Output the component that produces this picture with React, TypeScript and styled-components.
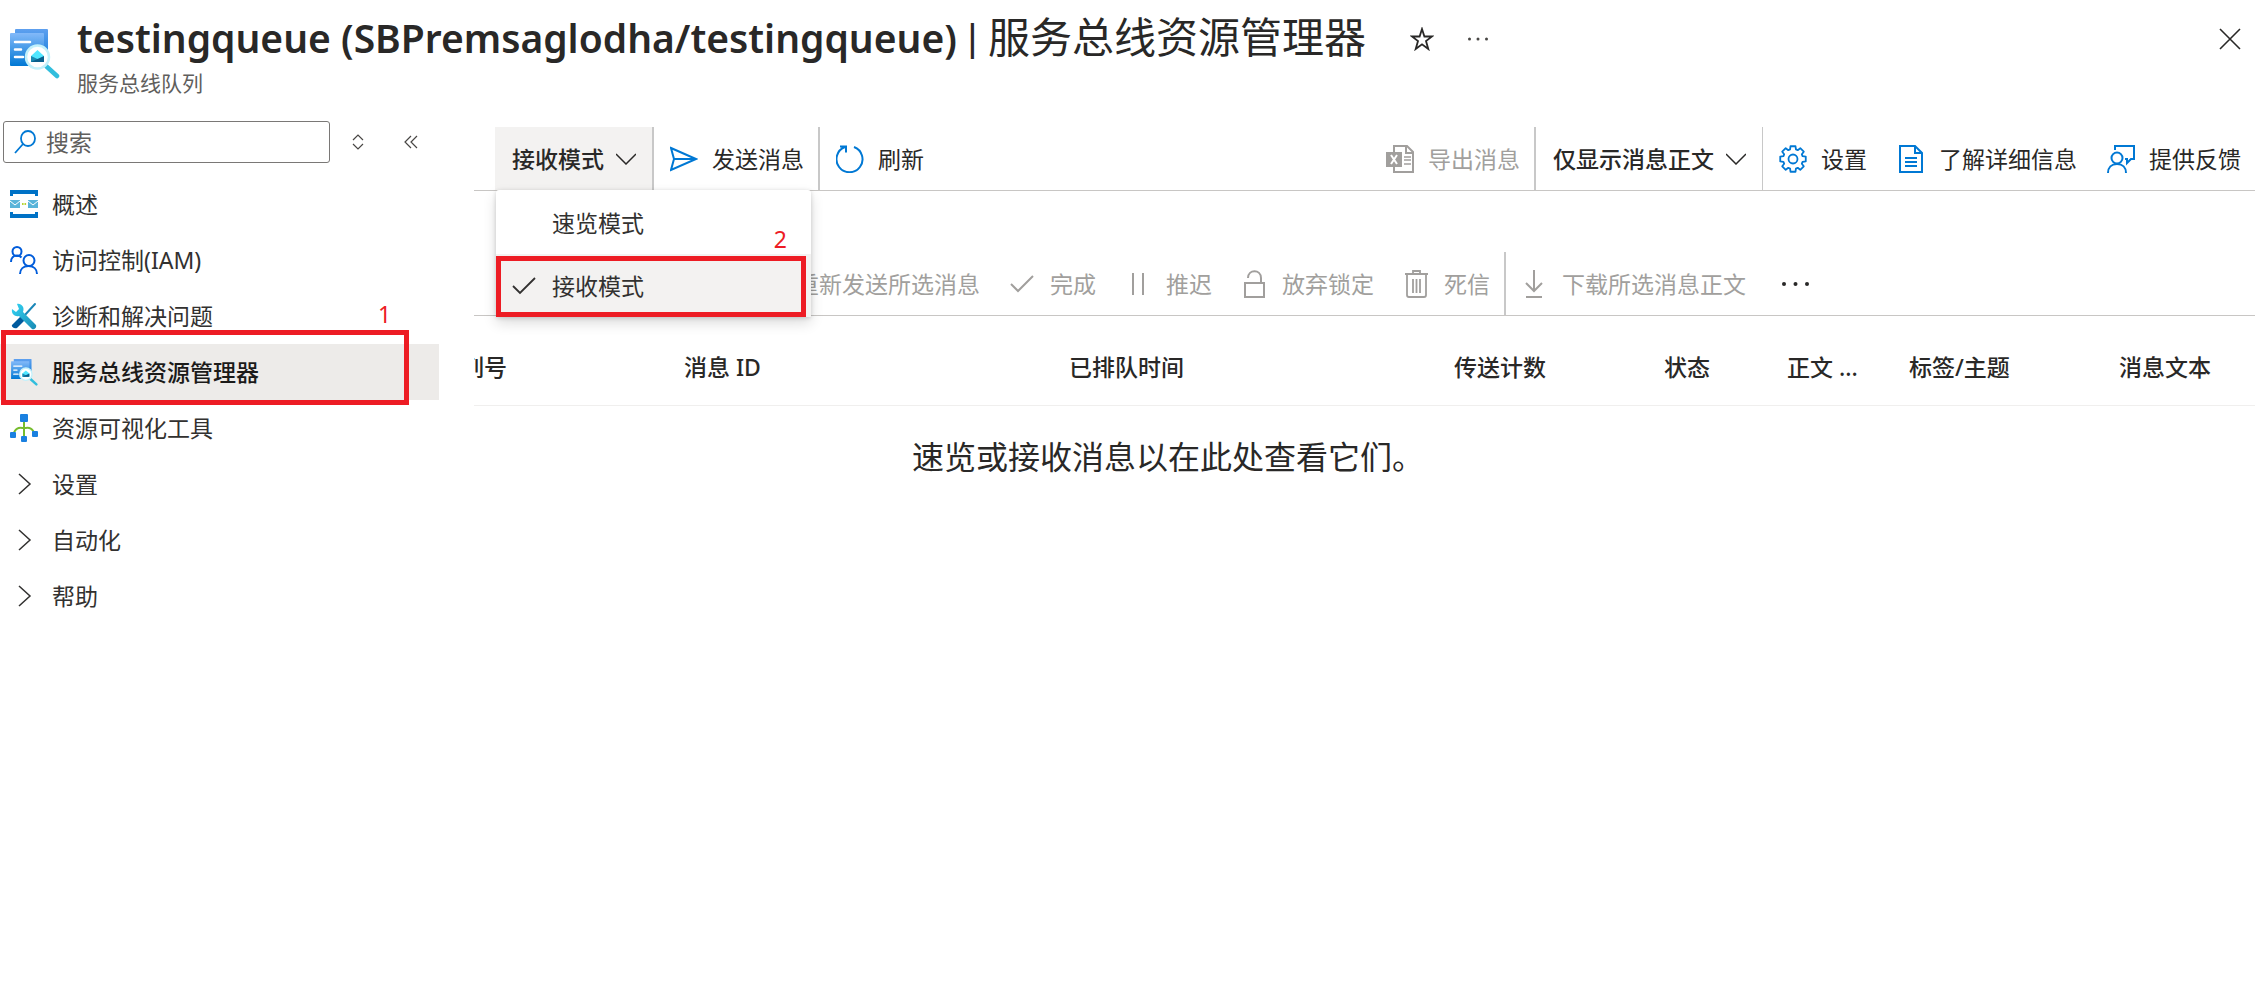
import React from "react";
import styled, { createGlobalStyle } from "styled-components";

const GlobalStyle = createGlobalStyle`
  *, *::before, *::after { box-sizing: border-box; }
  body {
    margin: 0;
    background: #ffffff;
    color: #292827;
    font-family: "Noto Sans", "Noto Sans CJK SC", sans-serif;
    font-size: 23px;
    line-height: 32px;
  }
  button, input { font: inherit; color: inherit; }
  svg { display: block; flex: none; }
`;

const BLUE = "#0078d4";
const RED = "#ed1c24";

/* ---------- layout ---------- */

const Page = styled.div`
  display: flex;
  flex-direction: column;
  min-height: 100vh;
`;

const Header = styled.header`
  display: flex;
  align-items: flex-start;
  height: 121px;
  padding: 7px 3px 0 8px;
`;

const HeaderIcon = styled.div`
  padding-top: 20px;
  margin-right: 17px;
`;

const TitleBlock = styled.div`
  display: flex;
  flex-direction: column;
  white-space: nowrap;
`;

const Title = styled.h1`
  margin: 0;
  font-size: 42px;
  line-height: 60px;
  font-weight: 400;
`;

const ResourceName = styled.span`
  font-size: 39px;
  font-weight: 600;
`;

const TitleDivider = styled.span`
  font-family: Roboto, sans-serif;
`;

const Subtitle = styled.div`
  font-size: 21px;
  line-height: 28px;
  color: #605e5c;
`;

const HeaderActions = styled.div`
  display: flex;
  flex: 1;
  padding: 16px 0 0 34px;
  gap: 12px;
`;

const IconButton = styled.button<{ $end?: boolean; $width?: number }>`
  display: flex;
  align-items: center;
  justify-content: center;
  align-self: center;
  width: ${(p) => p.$width ?? 44}px;
  height: 32px;
  padding: 0;
  border: 0;
  background: none;
  flex: none;
  margin-left: ${(p) => (p.$end ? "auto" : "0")};
`;

const Body = styled.div`
  display: flex;
  flex: 1;
`;

const Sidebar = styled.nav`
  width: 439px;
  flex: none;
`;

const SearchRow = styled.div`
  display: flex;
  align-items: center;
  gap: 3px;
  padding-left: 3px;
  margin-bottom: 13px;
  color: #484644;
`;

const SearchBox = styled.label`
  display: flex;
  align-items: center;
  gap: 10px;
  width: 327px;
  height: 42px;
  padding: 0 10px;
  border: 1px solid #7a7876;
  border-radius: 3px;
`;

const SearchInput = styled.input`
  flex: 1;
  min-width: 0;
  padding: 0;
  border: 0;
  outline: 0;
  background: none;
  &::placeholder { color: #605e5c; opacity: 1; }
`;

const NavList = styled.ul`
  list-style: none;
  margin: 0;
  padding: 0;
`;

const NavItem = styled.li`
  position: relative;
`;

const NavLink = styled.a<{ $active?: boolean }>`
  display: flex;
  align-items: center;
  gap: 14px;
  height: 56px;
  padding-left: 10px;
  color: ${(p) => (p.$active ? "#1b1a19" : "#323130")};
  background: ${(p) => (p.$active ? "#edebe9" : "transparent")};
  font-weight: ${(p) => (p.$active ? 500 : 400)};
  text-decoration: none;
`;

const Mark = styled.span`
  position: absolute;
  border: 5px solid ${RED};
  pointer-events: none;
`;

const NavMark = styled(Mark)`
  left: 1px;
  top: -14px;
  width: 408px;
  height: 75px;
`;

const MenuMark = styled(Mark)`
  left: 0;
  right: 5px;
  top: 2px;
  bottom: 0;
`;

const Note = styled.span`
  position: absolute;
  color: ${RED};
`;

const NavNote = styled(Note)`
  left: 378px;
  top: -46px;
`;

const MenuNote = styled(Note)`
  right: 24px;
  bottom: -1px;
`;

const Main = styled.main`
  flex: 1;
  min-width: 0;
  margin-left: 35px;
  padding-top: 6px;
`;

const Toolbar = styled.div<{ $inset: number }>`
  display: flex;
  height: 64px;
  padding-left: ${(p) => p.$inset}px;
  border-bottom: 1px solid #c8c6c4;
`;

const SelectionToolbar = styled(Toolbar)`
  margin-top: 61px;
`;

const Spacer = styled.div`
  flex: 1;
`;

const Separator = styled.span<{ $thin?: boolean }>`
  width: ${(p) => (p.$thin ? 1 : 2)}px;
  background: #c8c8c8;
  flex: none;
`;

const Command = styled.button<{ $tight?: boolean }>`
  display: flex;
  align-items: center;
  gap: 14px;
  padding: 0 14px 0 ${(p) => (p.$tight ? 14 : 16)}px;
  border: 0;
  background: none;
  white-space: nowrap;
  flex: none;
  &:disabled { color: #a19f9d; }
`;

const DropCommand = styled(Command)<{ $open?: boolean }>`
  gap: 12px;
  padding: 0 16px 0 17px;
  font-weight: 500;
  background: ${(p) => (p.$open ? "#f3f2f1" : "none")};
`;

const MenuAnchor = styled.div`
  position: relative;
  display: flex;
`;

const Menu = styled.ul`
  position: absolute;
  z-index: 1;
  left: 1px;
  top: 63px;
  width: 315px;
  margin: 0;
  padding: 1px 0 0;
  list-style: none;
  background: #ffffff;
  border-radius: 3px;
  box-shadow: 0 6px 14px rgba(0, 0, 0, 0.14), 0 1px 4px rgba(0, 0, 0, 0.16);
`;

const MenuItem = styled.li`
  position: relative;
`;

const MenuButton = styled.button<{ $checked?: boolean }>`
  display: grid;
  grid-template-columns: 24px auto;
  justify-content: start;
  column-gap: 16px;
  align-items: center;
  width: 100%;
  height: 63px;
  padding: 0 16px;
  border: 0;
  text-align: left;
  color: #323130;
  background: ${(p) => (p.$checked ? "#f3f2f1" : "none")};
`;

const TableClip = styled.div`
  overflow: hidden;
`;

const MessageTable = styled.table`
  width: calc(100% + 36px);
  margin-left: -36px;
  table-layout: fixed;
  border-collapse: collapse;
`;

const HeadCell = styled.th<{ $width?: number }>`
  width: ${(p) => (p.$width ? p.$width + "px" : "auto")};
  height: 89px;
  padding: 14px 0 0;
  text-align: left;
  font-weight: 500;
  white-space: nowrap;
  border-bottom: 1px solid #f0efee;
`;

const Empty = styled.td`
  padding: 28px 0 0 474px;
  font-size: 32px;
  line-height: 46px;
`;

/* ---------- icons ---------- */

const ExplorerIcon = ({ size }: { size: number }) => (
  <svg width={size} height={size} viewBox="0 0 52 52" aria-hidden="true">
    <defs>
      <linearGradient id="page-front" x1="0" y1="0" x2="0" y2="1">
        <stop offset="0" stopColor="#83b9f9" />
        <stop offset="1" stopColor="#0078d4" />
      </linearGradient>
      <linearGradient id="page-back" x1="0" y1="0" x2="0" y2="1">
        <stop offset="0" stopColor="#5ea0ef" />
        <stop offset="1" stopColor="#0f7cdb" />
      </linearGradient>
    </defs>
    <path d="M8 2h31a1 1 0 0 1 1 1v32H7V3a1 1 0 0 1 1-1z" fill="url(#page-back)" />
    <path d="M3 6h32a1 1 0 0 1 1 1v32H3a1 1 0 0 1-1-1V7a1 1 0 0 1 1-1z" fill="url(#page-front)" />
    <path d="M7 15h15M7 22.500h6M7 30h8" stroke="#fff" strokeWidth="2.500" strokeLinecap="round" />
    <path d="M38 39l11 10" stroke="#32bedd" strokeWidth="4.500" strokeLinecap="round" />
    <circle cx="29.500" cy="30" r="11.500" fill="#fff" stroke="#c3f1fb" strokeWidth="2.500" />
    <path d="M23 29l6.500-6 6.500 6v6H23z" fill="#50e6ff" />
    <path d="M23 29v6h13z" fill="#198ab3" />
    <path d="M36 29v6H23z" fill="#0a5f8c" />
  </svg>
);

const QueueIcon = () => (
  <svg width="28" height="28" viewBox="0 0 28 28" aria-hidden="true">
    <path d="M0 6V0h28v6h-3V4H3v2zM0 22v6h28v-6h-3v2H3v-2z" fill="#0072c6" />
    <path d="M0 10h10v8H0zM18 10h10v8H18z" fill="#59b4d9" />
    <path d="M0 11l5 4 5-4M18 11l5 4 5-4" fill="none" stroke="#fff" strokeWidth="1" />
    <path d="M12 14h1.600M14.500 14h1.600" stroke="#b8d432" strokeWidth="1.800" />
  </svg>
);

const PeopleIcon = () => (
  <svg width="28" height="28" viewBox="0 0 28 28" fill="none" stroke="#015cda" strokeWidth="2" aria-hidden="true">
    <circle cx="7" cy="5.500" r="4.500" />
    <path d="M1 16c0-4 2.500-6.500 6-6.500 2 0 3.500.8 4.500 2" />
    <circle cx="19" cy="14.500" r="5.500" />
    <path d="M10 28c0-5 3.500-8 8.500-8s8.500 3 8.500 8" />
  </svg>
);

const ToolsIcon = () => (
  <svg width="28" height="28" viewBox="0 0 28 28" aria-hidden="true">
    <defs>
      <linearGradient id="wrench" x1="0" y1="0" x2="1" y2="1">
        <stop offset="0" stopColor="#32d4f5" />
        <stop offset="1" stopColor="#198ab3" />
      </linearGradient>
    </defs>
    <path d="M25 2L14 14" stroke="#1a86b8" strokeWidth="2" strokeLinecap="round" />
    <path d="M2 23l9-9 4 4-8 8c-2 1-6-1-5-3z" fill="#005a9e" />
    <path d="M7 2c4-1 8 3 6 8l13 13c1 3-2 5-4 4L9 14c-4 1-8-2-7-7l4 3 3-3z" fill="url(#wrench)" />
  </svg>
);

const VisualizerIcon = () => (
  <svg width="28" height="28" viewBox="0 0 28 28" aria-hidden="true">
    <path d="M14 6v18M3 21c3-9 7-7 11-7s8-2 11 7" fill="none" stroke="#76bc2d" strokeWidth="2" />
    <g fill="#1a80e0">
      <rect x="10" y="0" width="8" height="8" rx="1" />
      <rect x="0" y="18" width="6" height="6" rx="1" />
      <rect x="11" y="22" width="6" height="6" rx="1" />
      <rect x="22" y="17" width="6" height="6" rx="1" />
    </g>
  </svg>
);

type LineProps = { d: string; w?: number; h?: number; color?: string; stroke?: number };

const Line = ({ d, w = 28, h = 28, color = "currentColor", stroke = 2 }: LineProps) => (
  <svg width={w} height={h} viewBox={`0 0 ${w} ${h}`} fill="none" stroke={color} strokeWidth={stroke} aria-hidden="true">
    <path d={d} />
  </svg>
);

const ChevronRight = () => <Line d="M9 4l11 10-11 10" stroke={1.5} />;
const ChevronDown = () => <Line w={20} h={12} d="M0 1l10 10L20 1" stroke={1.5} />;

const GearIcon = () => {
  const points: string[] = [];
  for (let i = 0; i < 8; i++) {
    [[-17, 10], [-11, 13], [11, 13], [17, 10]].forEach(([offset, r]) => {
      const a = ((i * 45 + offset) * Math.PI) / 180;
      points.push(`${(14 + r * Math.sin(a)).toFixed(2)},${(14 - r * Math.cos(a)).toFixed(2)}`);
    });
  }
  return (
    <svg width="28" height="28" viewBox="0 0 28 28" fill="none" stroke={BLUE} strokeWidth="1.800" strokeLinejoin="round" aria-hidden="true">
      <polygon points={points.join(" ")} />
      <circle cx="14" cy="14" r="4.500" />
    </svg>
  );
};

const ExcelIcon = () => (
  <svg width="28" height="28" viewBox="0 0 28 28" fill="none" stroke="#a19f9d" strokeWidth="2" aria-hidden="true">
    <path d="M8 7V1h13l6 6v20H8v-6M20 1v7h7" />
    <path d="M18 12h7M18 15h7M18 19h7" strokeWidth="1.500" />
    <path d="M0 7h16v15H0z" fill="#a19f9d" stroke="none" />
    <path d="M5 10l6 9M11 10l-6 9" stroke="#fff" />
  </svg>
);

const FeedbackIcon = () => (
  <svg width="28" height="28" viewBox="0 0 28 28" fill="none" stroke={BLUE} strokeWidth="2" aria-hidden="true">
    <path d="M8 5V1h19v13h-3l-4 4v-4h-2" />
    <circle cx="10" cy="13" r="5.500" />
    <path d="M1 28c0-5.500 3.500-9 9-9s9 3.500 9 9" />
  </svg>
);

const DotsIcon = ({ w, r, color }: { w: number; r: number; color: string }) => (
  <svg width={w} height="6" viewBox={`0 0 ${w} 6`} fill={color} aria-hidden="true">
    <circle cx={r} cy="3" r={r} />
    <circle cx={w / 2} cy="3" r={r} />
    <circle cx={w - r} cy="3" r={r} />
  </svg>
);

/* ---------- data ---------- */

const navItems = [
  { label: "概述", icon: <QueueIcon /> },
  { label: "访问控制(IAM)", icon: <PeopleIcon /> },
  { label: "诊断和解决问题", icon: <ToolsIcon /> },
  { label: "服务总线资源管理器", icon: <ExplorerIcon size={28} />, active: true },
  { label: "资源可视化工具", icon: <VisualizerIcon /> },
  { label: "设置", icon: <ChevronRight /> },
  { label: "自动化", icon: <ChevronRight /> },
  { label: "帮助", icon: <ChevronRight /> },
];

const selectionCommands = [
  { label: "重新发送所选消息", icon: <Line d="M2 3l25 11L2 25l4-11zM6 14h21" /> },
  { label: "完成", icon: <Line d="M3 14l7 7L25 6" /> },
  { label: "推迟", icon: <Line d="M9 3v22M19 3v22" /> },
  { label: "放弃锁定", icon: <Line d="M5 13h19v14H5zM8 8c0-9 13-9 13 0v5" /> },
  { label: "死信", icon: <Line d="M3 4h23M11 4V1h7v3M5 4v21q0 2 2 2h15q2 0 2-2V4M11 9v14M14.500 9v14M18 9v14" stroke={1.8} /> },
];

const columns = [
  { label: "序列号", width: 246 },
  { label: "消息 ID", width: 385 },
  { label: "已排队时间", width: 385 },
  { label: "传送计数", width: 210 },
  { label: "状态", width: 123 },
  { label: "正文 ...", width: 122 },
  { label: "标签/主题", width: 210 },
  { label: "消息文本" },
];

/* ---------- page ---------- */

export default function App() {
  return (
    <Page>
      <GlobalStyle />
      <Header>
        <HeaderIcon>
          <ExplorerIcon size={52} />
        </HeaderIcon>
        <TitleBlock>
          <Title>
            <ResourceName>testingqueue (SBPremsaglodha/testingqueue)</ResourceName>
            <TitleDivider> | </TitleDivider>
            服务总线资源管理器
          </Title>
          <Subtitle>服务总线队列</Subtitle>
        </TitleBlock>
        <HeaderActions>
          <IconButton aria-label="收藏">
            <Line w={24} h={24} stroke={1.8} d="M12 2l2.400 7.500H22l-6 4.500 2.300 8L12 17.300 5.700 22 8 14 2 9.500h7.600z" />
          </IconButton>
          <IconButton aria-label="更多">
            <DotsIcon w={20} r={1.5} color="#484644" />
          </IconButton>
          <IconButton $end aria-label="关闭">
            <Line w={22} h={22} stroke={1.6} d="M1 1l20 20M21 1L1 21" />
          </IconButton>
        </HeaderActions>
      </Header>

      <Body>
        <Sidebar>
          <SearchRow>
            <SearchBox>
              <Line w={22} h={24} color={BLUE} stroke={1.8} d="M1 23l8-9M14 1a7 7.500 0 1 1 0 15a7 7.500 0 1 1 0-15z" />
              <SearchInput type="search" placeholder="搜索" aria-label="搜索" />
            </SearchBox>
            <IconButton $width={50} aria-label="展开或折叠">
              <Line w={12} h={16} stroke={1.2} d="M1 6l5-5 5 5M1 10l5 5 5-5" />
            </IconButton>
            <IconButton $width={50} aria-label="隐藏菜单">
              <Line w={14} h={14} stroke={1.2} d="M7 1L1 7l6 6M13 1L7 7l6 6" />
            </IconButton>
          </SearchRow>
          <NavList>
            {navItems.map((item) => (
              <NavItem key={item.label}>
                <NavLink href="#" $active={item.active}>
                  {item.icon}
                  {item.label}
                </NavLink>
                {item.active && <NavMark />}
                {item.active && <NavNote>1</NavNote>}
              </NavItem>
            ))}
          </NavList>
        </Sidebar>

        <Main>
          <Toolbar $inset={21}>
            <MenuAnchor>
              <DropCommand $open aria-expanded="true">
                接收模式
                <ChevronDown />
              </DropCommand>
              <Menu>
                <MenuItem>
                  <MenuButton>
                    <span />
                    速览模式
                  </MenuButton>
                  <MenuNote>2</MenuNote>
                </MenuItem>
                <MenuItem>
                  <MenuButton $checked>
                    <Line w={24} h={18} d="M1 9l7 7L23 1" stroke={1.8} />
                    接收模式
                  </MenuButton>
                  <MenuMark />
                </MenuItem>
              </Menu>
            </MenuAnchor>
            <Separator />
            <Command>
              <Line color={BLUE} d="M1 3l25 11L1 25l3-11zM4 14h22" />
              发送消息
            </Command>
            <Separator />
            <Command>
              <Line color={BLUE} d="M18 2a13 13 0 1 1-9 0M4 1.500h6v6" />
              刷新
            </Command>
            <Spacer />
            <Command disabled>
              <ExcelIcon />
              导出消息
            </Command>
            <Separator />
            <DropCommand>
              仅显示消息正文
              <ChevronDown />
            </DropCommand>
            <Separator $thin />
            <Command>
              <GearIcon />
              设置
            </Command>
            <Command>
              <Line color={BLUE} d="M3 1h15l7 7v19H3zM18 1v7h7M8 13h12M8 17h12M8 21h12" />
              了解详细信息
            </Command>
            <Command>
              <FeedbackIcon />
              提供反馈
            </Command>
          </Toolbar>

          <SelectionToolbar $inset={266}>
            {selectionCommands.map((command) => (
              <Command key={command.label} $tight disabled>
                {command.icon}
                {command.label}
              </Command>
            ))}
            <Separator />
            <Command $tight disabled>
              <Line d="M14 0v21M6 13l8 8 8-8M6 27h16" />
              下载所选消息正文
            </Command>
            <IconButton $width={70} aria-label="更多命令">
              <DotsIcon w={27} r={2} color="#292827" />
            </IconButton>
          </SelectionToolbar>

          <TableClip>
            <MessageTable>
              <thead>
                <tr>
                  {columns.map((column) => (
                    <HeadCell key={column.label} $width={column.width} scope="col">
                      {column.label}
                    </HeadCell>
                  ))}
                </tr>
              </thead>
              <tbody>
                <tr>
                  <Empty colSpan={columns.length}>速览或接收消息以在此处查看它们。</Empty>
                </tr>
              </tbody>
            </MessageTable>
          </TableClip>
        </Main>
      </Body>
    </Page>
  );
}
